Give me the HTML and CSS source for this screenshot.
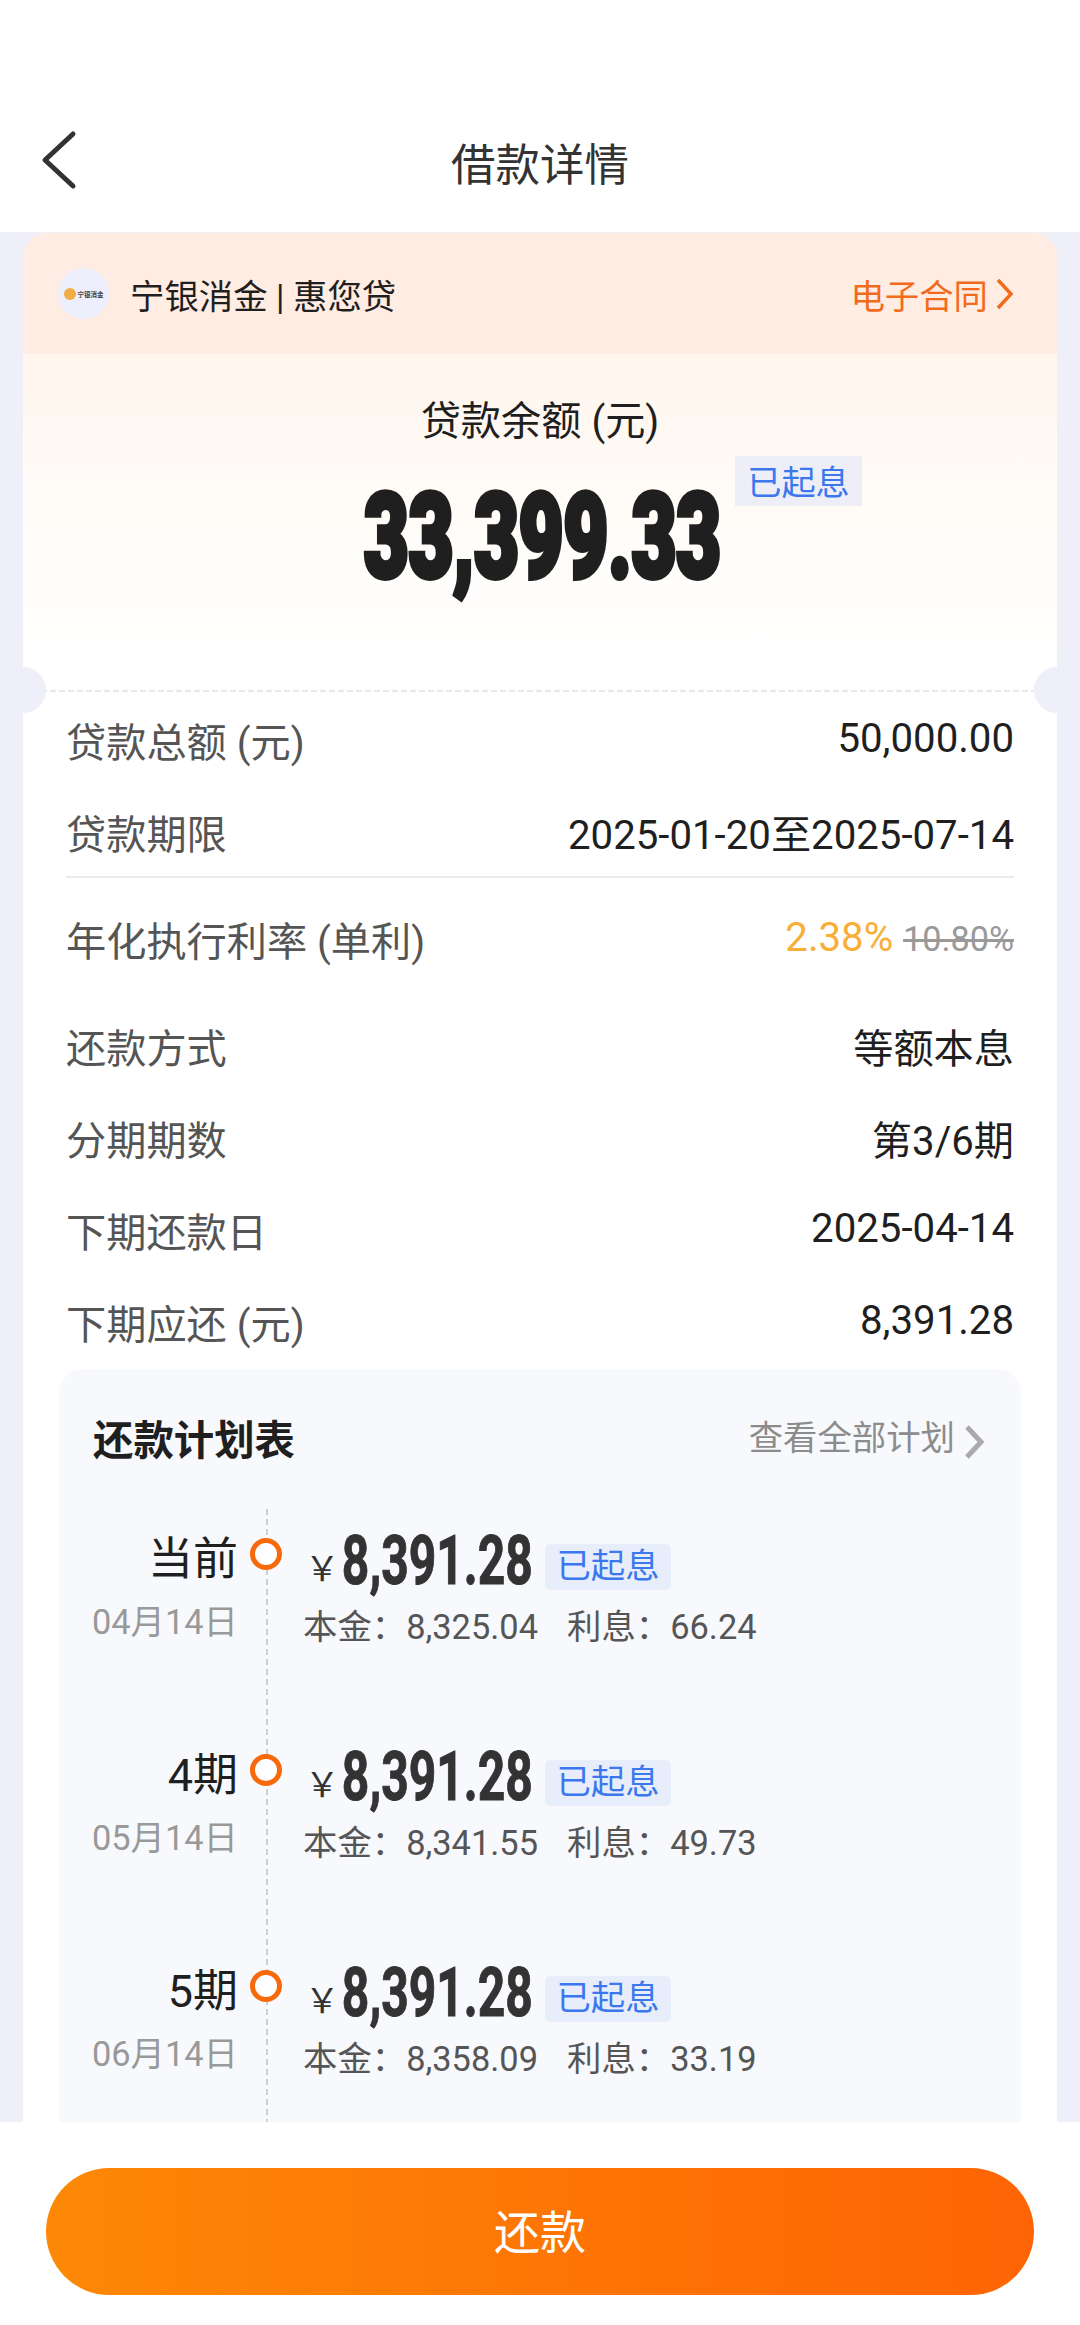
FILE: index.html
```html
<!DOCTYPE html>
<html lang="zh-CN">
<head>
    <meta charset="UTF-8">
    <meta name="viewport" content="width=device-width, initial-scale=1.0">
    <title>借款详情</title>
    <link rel="stylesheet" href="styles.css">
</head>
<body>
    <header class="navbar">
        <svg class="back" viewBox="0 0 36 60" fill="none" stroke="#333" stroke-width="5" stroke-linecap="round" stroke-linejoin="round"><path d="M32 4L4 30L32 56"/></svg>
        <h1>借款详情</h1>
    </header>

    <main class="content">
        <div class="card">
            <div class="brand">
                <div class="logo"><i></i><span>宁银消金</span></div>
                <span class="brand-name">宁银消金 | 惠您贷</span>
                <a class="contract">电子合同
                    <svg viewBox="0 0 20 32" fill="none" stroke="#f26b1d" stroke-width="3.5"><path d="M3 2L16 16L3 30"/></svg>
                </a>
            </div>

            <section class="balance">
                <p class="balance-title">贷款余额 (元)</p>
                <div class="balance-num">
                    <span>33,399.33</span>
                    <em class="tag-top">已起息</em>
                </div>
            </section>

            <div class="cut"></div>

            <ul class="info">
                <li><label>贷款总额 (元)</label><span class="num">50,000.00</span></li>
                <li class="line"><label>贷款期限</label><span>2025-01-20至2025-07-14</span></li>
                <li class="rate"><label>年化执行利率 (单利)</label><span class="num"><b>2.38%</b> <s>10.80%</s></span></li>
                <li><label>还款方式</label><span>等额本息</span></li>
                <li><label>分期期数</label><span>第3/6期</span></li>
                <li><label>下期还款日</label><span class="num">2025-04-14</span></li>
                <li><label>下期应还 (元)</label><span class="num">8,391.28</span></li>
            </ul>

            <section class="plan">
                <div class="plan-head">
                    <h2>还款计划表</h2>
                    <a>查看全部计划
                        <svg viewBox="0 0 22 34" fill="none" stroke="#aaa" stroke-width="5"><path d="M3 2L17 17L3 32"/></svg>
                    </a>
                </div>
                <div class="timeline">
                    <div class="item">
                        <div class="when"><strong>当前</strong><small>04月14日</small></div>
                        <div class="dot"></div>
                        <div class="detail">
                            <div class="pay"><i>￥</i><span class="money"><b>8,391.28</b></span><em class="tag">已起息</em></div>
                            <p><span>本金：8,325.04</span><span>利息：66.24</span></p>
                        </div>
                    </div>
                    <div class="item">
                        <div class="when"><strong>4期</strong><small>05月14日</small></div>
                        <div class="dot"></div>
                        <div class="detail">
                            <div class="pay"><i>￥</i><span class="money"><b>8,391.28</b></span><em class="tag">已起息</em></div>
                            <p><span>本金：8,341.55</span><span>利息：49.73</span></p>
                        </div>
                    </div>
                    <div class="item">
                        <div class="when"><strong>5期</strong><small>06月14日</small></div>
                        <div class="dot"></div>
                        <div class="detail">
                            <div class="pay"><i>￥</i><span class="money"><b>8,391.28</b></span><em class="tag">已起息</em></div>
                            <p><span>本金：8,358.09</span><span>利息：33.19</span></p>
                        </div>
                    </div>
                </div>
            </section>
        </div>
    </main>

    <footer class="footer">
        <button class="repay">还款</button>
    </footer>
</body>
</html>
```
FILE: styles.css
```css
* {
    box-sizing: border-box;
    margin: 0;
    padding: 0;
}
body {
    width: 1080px;
    height: 2325px;
    display: flex;
    flex-direction: column;
    overflow: hidden;
    background: #fff;
    color: #1f1f1f;
    font-family: Roboto, "Noto Sans CJK SC", sans-serif;
    font-size: 40.2px;
}
i, em {
    font-style: normal;
}
.navbar {
    height: 233px;
    padding: 96px 41px 0;
    display: grid;
    grid-template-columns: 36px 1fr 36px;
    align-items: center;
    border-bottom: 1px solid #f0f0f3;
}
.back {
    width: 36px;
    height: 60px;
    margin-bottom: 9px;
}
.navbar h1 {
    font-size: 44.5px;
    font-weight: 400;
    text-align: center;
    color: #333;
    line-height: 60px;
    padding-top: 3px;
}
.content {
    height: 1889px;
    padding: 0 23px;
    background: #efeffa;
    overflow: hidden;
}
.card {
    height: 1889px;
    background: #fff;
    border-radius: 24px 24px 0 0;
    overflow: hidden;
}

/* 品牌栏 */
.brand {
    height: 121px;
    padding: 0 42px 0 35px;
    display: flex;
    align-items: center;
    background: #ffece2;
    font-size: 34.4px;
}
.logo {
    width: 51px;
    height: 51px;
    border-radius: 50%;
    background: #edf0fc;
    display: flex;
    align-items: center;
    justify-content: center;
    gap: 2px;
}
.logo i {
    width: 12px;
    height: 12px;
    border-radius: 50%;
    background: #f3ad43;
}
.logo span {
    font-size: 6.5px;
    font-weight: 700;
    color: #444;
}
.brand-name {
    margin-left: 21px;
}
.contract {
    margin-left: auto;
    display: flex;
    align-items: center;
    gap: 7px;
    color: #f26b1d;
}
.contract svg {
    width: 20px;
    height: 32px;
}

/* 贷款余额 */
.balance {
    height: 336px;
    padding-top: 38px;
    text-align: center;
    background: linear-gradient(#fff6ee, #fffdfa 60%, #fff 92%);
}
.balance-title {
    line-height: 60px;
}
.balance-num {
    width: 362px;
    height: 125px;
    margin: 19px auto 0;
    position: relative;
    display: flex;
    justify-content: center;
}
.balance-num span {
    font-size: 116px;
    font-weight: 900;
    line-height: 133px;
    margin-left: 5px;
    transform: scaleX(0.665);
    -webkit-text-stroke: 6px #1f1f1f;
}
.tag-top {
    position: absolute;
    left: 376px;
    top: -15px;
    width: 127px;
    height: 50px;
    line-height: 55px;
    font-size: 34.2px;
    color: #3b78ee;
    background: #eeeef8;
}

/* 票据缺口 */
.cut {
    height: 46px;
    margin: -23px 0 -17px;
    background:
        radial-gradient(circle at 0 50%, #efeffa 22.5px, transparent 23.5px),
        radial-gradient(circle at 100% 50%, #efeffa 22.5px, transparent 23.5px),
        repeating-linear-gradient(90deg, #e8e8e8 0 6px, transparent 6px 9px) 0 23px / 100% 2px no-repeat;
}

.info {
    list-style: none;
    padding: 0 43px;
}
.info li {
    height: 92px;
    padding-top: 3px;
    display: flex;
    justify-content: space-between;
    align-items: center;
    line-height: 60px;
}
.info label {
    color: #555;
}
.info .num {
    padding-bottom: 9px;
}
.info .line {
    background: linear-gradient(#ebebeb, #ebebeb) 0 88px / 100% 2px no-repeat;
}
.info .rate {
    height: 122px;
}
.info b {
    font-weight: 400;
    color: #f9ae38;
}
.info s {
    font-size: 34.2px;
    color: #999;
}

/* 还款计划 */
.plan {
    height: 760px;
    margin: -1px 36px 0;
    padding: 40px 35px 0;
    background: #f8f9fd;
    border-radius: 24px 24px 0 0;
}
.plan-head {
    height: 60px;
    display: flex;
    justify-content: space-between;
    align-items: center;
}
.plan-head h2 {
    font-size: 40.4px;
    font-weight: 700;
    margin: -3px 0 0 -1px;
}
.plan-head a {
    display: flex;
    align-items: center;
    gap: 9px;
    font-size: 34.4px;
    line-height: 50px;
    color: #8c8c8c;
    margin-top: -3px;
}
.plan-head svg {
    width: 22px;
    height: 34px;
    margin-top: 8px;
}
.timeline {
    height: 660px;
    margin-top: 40px;
    padding-top: 18px;
    background: repeating-linear-gradient(#cfcfd2 0 6px, transparent 6px 10px) 172px 0 / 2px 100% no-repeat;
}
.item {
    height: 216px;
    display: flex;
}
.when {
    width: 144px;
    display: flex;
    flex-direction: column;
    align-items: flex-end;
    white-space: nowrap;
}
.when strong {
    font-size: 45px;
    font-weight: 400;
    line-height: 66px;
}
.when small {
    font-size: 34.4px;
    line-height: 50px;
    margin-top: 4px;
    color: #999;
}
.dot {
    width: 32px;
    height: 32px;
    margin: 11px 0 0 12px;
    border: 5px solid #f76a0c;
    border-radius: 50%;
    background: #fff;
}
.detail {
    margin-left: 21px;
    color: #555;
    font-size: 34.4px;
}
.pay {
    height: 70px;
    display: flex;
    align-items: flex-start;
    color: #333;
}
.pay i {
    width: 39px;
    padding-left: 2px;
    line-height: 50px;
    margin-top: 17px;
}
.money {
    width: 190px;
    display: flex;
    justify-content: center;
}
.money b {
    font-size: 69px;
    line-height: 67px;
    transform: scaleX(0.695);
    -webkit-text-stroke: 1px #333;
}
.tag {
    width: 126px;
    height: 46px;
    margin: 17px 0 0 13px;
    border-radius: 5px;
    background: #e8edfb;
    color: #3b78ee;
    text-align: center;
    line-height: 45px;
}
.detail p {
    display: flex;
    gap: 29px;
    line-height: 50px;
    margin-top: 5px;
}

.footer {
    flex: 1;
    padding: 46px 46px 0;
    background: #fff;
}
.repay {
    display: block;
    width: 988px;
    height: 127px;
    padding-bottom: 6px;
    border: none;
    border-radius: 64px;
    color: #fff;
    font-family: inherit;
    font-size: 46px;
    background: linear-gradient(90deg, #fd8806, #fe6404);
}
```
